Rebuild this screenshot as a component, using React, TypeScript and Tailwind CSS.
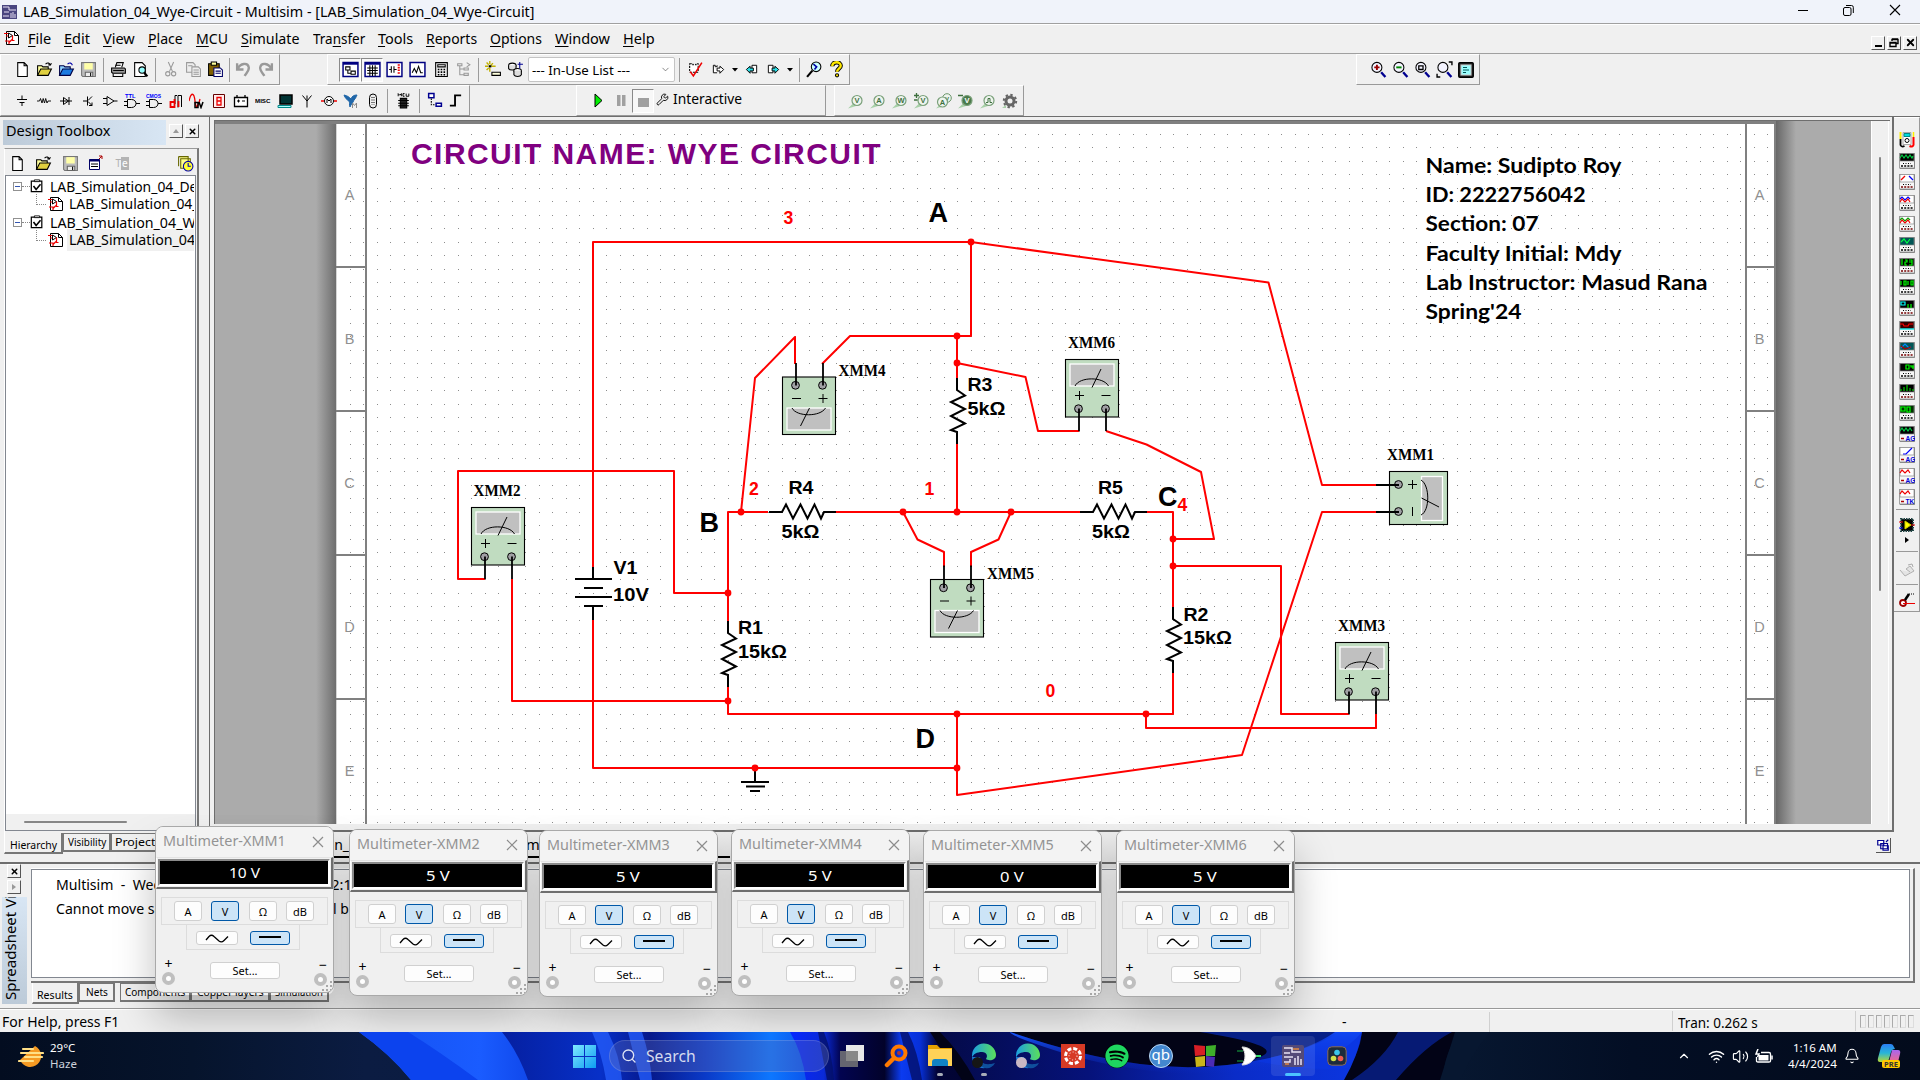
import React, { useLayoutEffect, useRef, useState } from "react";
import { Bell, ChevronDown, ChevronUp, Search, Volume2, Wifi, X, Wrench } from "lucide-react";
import { FaSpotify } from "react-icons/fa";

/* Single line of text squeezed or stretched to a fixed width. */
function T({ w, children, className = "" }: { w: number; children: React.ReactNode; className?: string }) {
  const ref = useRef<HTMLSpanElement>(null);
  const [k, setK] = useState(1);
  useLayoutEffect(() => {
    if (ref.current && ref.current.offsetWidth) setK(w / ref.current.offsetWidth);
  }, [w]);
  return (
    <span className={"inline-block shrink-0 whitespace-pre " + className} style={{ width: w }}>
      <span ref={ref} className="inline-block origin-left" style={{ transform: `scaleX(${k})` }}>
        {children}
      </span>
    </span>
  );
}

function I({ children, s = 17 }: { children: React.ReactNode; s?: number }) {
  return (
    <svg width={s} height={s} viewBox="0 0 16 16" fill="none" stroke="#000" strokeWidth="1" className="shrink-0">
      {children}
    </svg>
  );
}

function Cell({ w = 22, children, down = false }: { w?: number; children?: React.ReactNode; down?: boolean }) {
  return (
    <div
      className={
        "flex h-6 shrink-0 items-center justify-center " +
        (down ? "border border-[#8a8a8a] border-r-white border-b-white bg-[#f8f8f8]" : "")
      }
      style={{ width: w }}
    >
      {children}
    </div>
  );
}

function Sep({ w = 8 }: { w?: number }) {
  return (
    <div className="flex h-6 shrink-0 justify-center" style={{ width: w }}>
      <div className="h-6 w-px bg-[#9b9b9b]" />
    </div>
  );
}

const bar = "flex items-center border-b border-r border-l border-t border-l-white border-t-white border-r-[#999] border-b-[#999] shrink-0";

const NewI = <I><path d="M3.500 1.500h6l3 3v10h-9zM9.500 1.500v3h3" fill="#fff" /></I>;
const OpenI = (
  <I><path d="M1.500 13.500v-9h4l1 1h5v2" fill="#ffff9c" /><path d="M1.500 13.500l3-6h10l-3 6z" fill="#e0d040" /><path d="M9 3c2-2 4-1 4.500 1m0 0l-2-.5m2 .5l1-2" /></I>
);
const OpenBlueI = (
  <I><path d="M1.500 13.500v-9h4l1 1h5v2" fill="#8ed0ff" stroke="#004" /><path d="M1.500 13.500l3-6h10l-3 6z" fill="#1c7be0" stroke="#004" /><path d="M9 3c2-2 4-1 4.500 1" stroke="#00a" /></I>
);
const SaveI = (
  <I><path d="M1.500 1.500h13v13h-12l-1-1z" fill="#bcbcbc" stroke="#777" /><path d="M4 2h8v6H4z" fill="#ffffa8" stroke="none" /><path d="M5 10.500h7v4H5z" fill="#eee" stroke="#666" /><path d="M10 11v3" stroke="#000" /></I>
);
const PrintI = (
  <I><path d="M5 6l1.500-4.500h6L11 6" fill="#fff" /><path d="M1.500 6.500h12l1 1v4h-12l-1-1z" fill="#999" /><path d="M3 12v2.500h9V12M3 9h10" /><path d="M5 4h5" /></I>
);
const PreviewI = (
  <I><path d="M2.500 1.500h7l3 3v10h-10z" fill="#fff" /><circle cx="9.500" cy="8.500" r="3" fill="#9ff" /><path d="M11.500 11l3 3.500" strokeWidth="2" /></I>
);
const CutI = <I><path d="M5 1l4 9M10 1L6 10" stroke="#999" /><circle cx="4.500" cy="12" r="2" stroke="#999" /><circle cx="10" cy="12" r="2" stroke="#999" /></I>;
const CopyI = (
  <I><path d="M1.500 1.500h6l2 2v7h-8z" fill="#eee" stroke="#999" /><path d="M6.500 5.500h6l2 2v7h-8z" fill="#eee" stroke="#999" /><path d="M8 8.500h5M8 10.500h5M8 12.500h5M3 4.500h4" stroke="#999" /></I>
);
const PasteI = (
  <I><path d="M1.500 2.500h10v11h-10z" fill="#806000" /><path d="M4 1h5v3H4z" fill="#ff9" /><path d="M6.500 6.500h6l2 2v6h-8z" fill="#fff" stroke="#006" /><path d="M8 9.500h5M8 11.500h5" stroke="#006" /></I>
);
const UndoI = <I><path d="M2 2v6h6M2.500 7.500C5 2 12 1 13 6c.4 3-2 5-4 8" stroke="#999" strokeWidth="2.200" /></I>;
const RedoI = <I><path d="M14 2v6H8M13.500 7.500C11 2 4 1 3 6c-.4 3 2 5 4 8" stroke="#999" strokeWidth="2.200" /></I>;
const winFrame = <path d="M1 1.500h14v13H1z" fill="#fff" stroke="#000080" strokeWidth="1.400" />;
const W1 = <I>{winFrame}<path d="M1 2.500h14" stroke="#000080" strokeWidth="2" /><path d="M3.500 5.500h4v3h-4zM8.500 9.500h4v3h-4zM5.500 9v2.500h3" /></I>;
const W2 = <I>{winFrame}<path d="M1 2.500h14" stroke="#000080" strokeWidth="2" /><path d="M3 6.500h10M3 9h10M3 11.500h10M5.500 4v10M8 4v10M10.500 4v10" /></I>;
const W3 = <I>{winFrame}<path d="M3 8h2M8 8h2M5 5v6M7.500 5v6" /><path d="M12 3v10" stroke="#e00" strokeWidth="2" strokeDasharray="1.500 1" /></I>;
const W4 = <I>{winFrame}<path d="M3 11l2-4 2 4 2-6 2 6h2" /></I>;
const W5 = <I><path d="M2.500 1.500h11v13h-11z" fill="#eee" /><path d="M4.500 3.500h7v2h-7z" fill="#fff" /><path d="M4.500 8h7M4.500 10.500h7M4.500 13h7" strokeDasharray="1.500 1.200" strokeWidth="1.500" /></I>;
const W6 = <I><path d="M2.500 2.500h4v2h-4zM8.500 6.500h4v2h-4zM8.500 11.500h4v2h-4zM4.500 5v8h4M4.500 7.500h4M11 1.500l3 2-3 2" stroke="#999" /></I>;
const W7 = <I><path d="M4.500 0v3M4.500 6v4M0 5h3M6 5h4M1.500 1.500l2 2M7.500 2l-2 2M1.500 8.500l2-2" stroke="#c0b000" strokeWidth="1.300" /><path d="M4 4.500h1.500v1H4z" fill="#000" /><path d="M6.500 10.500h8v3h-8z" fill="#ffd" /></I>;
const W8 = <I><ellipse cx="5" cy="4" rx="3.500" ry="2" fill="#fff" /><path d="M1.500 4v3c1 2 6 2 7 0V4" fill="#ddd" /><ellipse cx="10" cy="9" rx="3.500" ry="2" fill="#fff" /><path d="M6.500 9v4c1 2 6 2 7 0V9" fill="#ddd" /><path d="M10 3h5m-3-2v6" stroke="#000090" /></I>;
const Chk = <I><path d="M2.500 2.500h3v1h3v-1h2v8h-8z" fill="#fff" strokeDasharray="2 1" /><path d="M3 10l3 4L14 1.500" stroke="#e00" strokeWidth="1.500" /></I>;
const Gate1 = <I s={15}><path d="M2.500 3.500h2v1.500h2V3.500M2.500 3.500v8h4" fill="#fff" /><path d="M6.500 6.500h3v-2l4 3.500-4 4v-2.500h-3z" fill="#fff" /></I>;
const Gate2 = <I s={15}><path d="M8.500 3.500h5v8h-5z" fill="#fff" /><path d="M10 6.500H6.500v-2L2.500 8l4 4v-2.500H10z" fill="#2ce0e8" /></I>;
const Gate3 = <I s={15}><path d="M2.500 3.500h5v8h-5z" fill="#fff" /><path d="M6.500 6.500h3v-2l4 3.500-4 4v-2.500h-3z" fill="#2ce0e8" /></I>;
const FindI = <I><circle cx="9.500" cy="5.500" r="4.500" fill="#cff" /><path d="M7 3l3 2.500L8 8" stroke="#00a" strokeWidth="1.500" /><path d="M6 9l-5 6" strokeWidth="2" /></I>;
const HelpI = <I><path d="M4 5c0-5 8-5 8-.5C12 7 8.500 7.500 8.500 10" stroke="#000" strokeWidth="4" /><path d="M4 5c0-5 8-5 8-.5C12 7 8.500 7.500 8.500 10" stroke="#ffe800" strokeWidth="2.200" /><circle cx="8.500" cy="13.500" r="1.500" fill="#ffe800" /></I>;
const Tri = <svg width="6" height="4" viewBox="0 0 6 4"><path d="M0 0h6L3 3.500z" fill="#000" /></svg>;

function Mag({ kind }: { kind: number }) {
  return (
    <I>
      <circle cx="6.500" cy="6" r="4.700" fill="#f4f4ff" />
      <path d="M10.500 10.500l4 4.500" stroke="#000090" strokeWidth="2.200" />
      {kind === 0 && <path d="M4 6h5M6.500 3.500v5" stroke="#900" strokeWidth="1.800" />}
      {kind === 1 && <path d="M4 6h5" stroke="#080" strokeWidth="1.800" />}
      {kind === 2 && <path d="M4.500 4.500h4v3.500h-4z" strokeWidth="1.200" />}
      {kind === 3 && <path d="M12 1h3v3M1 12v3h3" strokeWidth="1.300" />}
    </I>
  );
}

const compIcons: React.ReactNode[] = [
  <path d="M8 2.500v4M8 9v4M3 6.500h10M5.500 9.500h5" />,
  <path d="M1 8h2.500l1-2.500L6 10l1.200-4.500L8.500 10l1.200-4.500L11 10l1-2H15" strokeWidth=".9" />,
  <path d="M2 8h12M5.500 4.500v7l5-3.500zM11 4v8" />,
  <path d="M3 8h4M7.500 3.500v9M8 7.500l4-4M8 8.500l4 4m0-3v3H9" />,
  <path d="M1 5.500h4M1 10.500h4M5 3.500v9l7-4.500zM12 8h3.500" />,
  <g><text x="1" y="4.500" fontSize="5.800" fill="#00f" stroke="none" fontWeight="bold" fontFamily="Liberation Sans, sans-serif">TTL</text><path d="M0 8.500h4M0 12.500h4M3.500 6.500h4c6 0 6 8 0 8h-4zM12 10.500h4" /></g>,
  <g><text x="0" y="4.500" fontSize="5" fill="#00f" stroke="none" fontWeight="bold" fontFamily="Liberation Sans, sans-serif">CMOS</text><path d="M0 8.500h4M0 12.500h4M3.500 6.500h4c6 0 6 8 0 8h-4zM12 10.500h4" /></g>,
  <g><path d="M7 11V2.500h2M13.500 14V2.500H10v12" stroke="#000" /><path d="M2.500 9h4v5h-4zM6.500 6v8M10.500 8v6" stroke="#e00" strokeWidth="1.800" /></g>,
  <g><path d="M0 8c2-9 5-9 6 0s3 6 5-2" stroke="#e00" strokeWidth="1.300" /><path d="M6 9.500h3v5H6zM10 9l2 5.500L14 9" strokeWidth="1.500" /></g>,
  <g><path d="M2.500 1.500h11v13h-11z" stroke="#600" fill="#fee" /><path d="M6 4.500h4v3.500H6zM6 8h4v4H6z" stroke="#e00" strokeWidth="1.300" /></g>,
  <g><path d="M1.500 4.500h13v9h-13zM4 2v2M12 2v2" fill="#fff" strokeWidth="1.300" /><path d="M4 8h3M5.500 6.500v3M9 8h3" /></g>,
  <text x="0" y="9.500" fontSize="6.200" fill="#000" stroke="none" fontWeight="bold" fontFamily="Liberation Sans, sans-serif">MISC</text>,
  <g><path d="M3 2h12v9H3z" fill="#033" stroke="#000" strokeWidth="1.500" /><path d="M1 12.500h13v2H1z" fill="#aff" stroke="#088" /></g>,
  <path d="M8 14.500V7M8 8L3.500 2.500M8 8l4.500-5.500M8 8V2.500" />,
  <g><circle cx="8" cy="8" r="4.500" fill="#fff" /><path d="M0 8h3M13 8h3" stroke="#e00" strokeWidth="1.500" /><path d="M6 10V6l2 2 2-2v4" /></g>,
  <g><path d="M1 2c4 1 5 2 7 4 1-3 3-4 6-4-1 2-1 3-3 5-1 3-3 4-4 7-1-3 0-4-1-6C4 7 2 5 1 2z" fill="#1f66a8" stroke="#1f66a8" /><path d="M9.500 15v-5l2 2.500 2-2.500v5" stroke="#888" /></g>,
  <g><rect x="4.500" y="1" width="7" height="14" rx="3.500" fill="#eee" /><path d="M7 4v8M9 4v8" strokeDasharray="1 1.500" /></g>,
];

function MiniBtn({ children, dis = false }: { children: React.ReactNode; dis?: boolean }) {
  return (
    <div className={"flex h-[14px] w-[14px] items-center justify-center border border-white border-r-[#555] border-b-[#555] bg-[#f0f0f0] text-[10px] leading-none " + (dis ? "text-[#999]" : "text-black")}>
      {children}
    </div>
  );
}

function Probe({ k }: { k: number }) {
  const l = ["V", "A", "W", "V", "A", "V", "", ""][k];
  if (k === 7)
    return <I s={16}><circle cx="8" cy="8" r="4" stroke="#666" strokeWidth="3" /><circle cx="8" cy="8" r="6.200" stroke="#666" strokeWidth="2" strokeDasharray="2.400 2.400" /><path d="M0 15l4-3v3z" fill="#a8cfa8" stroke="none" /></I>;
  const fill = k === 5 ? "#4a7a4a" : "#eef4ee";
  const cx = k === 4 ? 6.500 : 9;
  const cy = k === 4 ? 9 : 7.500;
  return (
    <I s={16}>
      <path d="M0 15.500l5-5 3 2.500z" fill="#a8d0a8" stroke="none" />
      {k === 4 && <circle cx="11" cy="5" r="4.300" fill={fill} stroke="#6a956a" />}
      {k === 4 && <text x="11" y="7.500" fontSize="6" fontWeight="bold" textAnchor="middle" stroke="none" fill="#3f703f" fontFamily="Liberation Sans, sans-serif">V</text>}
      <circle cx={cx} cy={cy} r="5" fill={fill} stroke="#7aa07a" strokeWidth="1.200" />
      {l && <text x={cx} y={cy + 2.700} fontSize="7.500" fontWeight="bold" textAnchor="middle" stroke="none" fill={k === 5 ? "#fff" : "#3f703f"} fontFamily="Liberation Sans, sans-serif">{l}</text>}
      {k === 6 && <path d="M6 9.500h2v-4h2v4h2" stroke="#3f703f" />}
      {k === 3 && <path d="M0 2.500h5M2.500 0v5M0 7h3.500" stroke="#3f703f" strokeWidth="1.300" />}
      {k === 5 && <path d="M0 2.500h5" stroke="#3f703f" strokeWidth="1.500" />}
    </I>
  );
}

/* ---------- schematic ---------- */

function Meter({ x, y, flip = false }: { x: number; y: number; flip?: boolean }) {
  const m = (v: number) => (flip ? 57.500 - v : v);
  const h = flip ? 57.500 : 0;
  return (
    <g transform={`translate(${x} ${y})`}>
      <rect x="0" y="0" width="53" height="57.500" fill="#c0dcc0" stroke="#000" strokeWidth="1.100" />
      <rect x="4.500" y={flip ? h - 26.500 : 4.500} width="44" height="22" fill="#c0c0c0" stroke="#fff" strokeWidth="1.300" />
      <path d={flip ? "M9.500 31C14 40 38 40 43 31" : "M9.500 26.500C14 17 38 17 43 26.500"} fill="none" stroke="#000" />
      <path d={flip ? "M27 31L18 49" : "M35.500 9.500L26.500 28"} stroke="#000" />
      <circle cx="13" cy={m(49.200)} r="3.900" fill="#a0a0a4" stroke="#000" />
      <circle cx="40" cy={m(49.200)} r="3.900" fill="#a0a0a4" stroke="#000" />
      <path d={`M13.500 ${m(49)}V${m(71.500)}M40.500 ${m(49)}V${m(71.500)}`} stroke="#000" strokeWidth="1.800" />
      <path d={`M9.500 ${m(36)}h9M36 ${m(36)}h9`} stroke="#000" />
      <path d={flip ? `M40.500 ${m(36) - 4.500}v9` : `M14 ${m(36) - 4.500}v9`} stroke="#000" />
    </g>
  );
}

const ZV = "v12l8 5.500l-14 6.500l14 7l-14 7l14 7.500l-14 6.500l6 2v12";
const ZH = "h13l4-7.500l7 14l7.500-14l7 14l7-14l6.500 14l3-6.500h12";

function Txt({ x, y, w, s = 18.500, c = "#000", f = "Liberation Sans, sans-serif", sp = false, children }: { x: number; y: number; w?: number; s?: number; c?: string; f?: string; sp?: boolean; children: string }) {
  return (
    <text x={x} y={y} fontSize={s} fill={c} fontWeight="bold" fontFamily={f} {...(w ? { textLength: w, lengthAdjust: sp ? ("spacing" as const) : ("spacingAndGlyphs" as const) } : {})}>
      {children}
    </text>
  );
}

function Schematic() {
  const dots = [[971, 242], [957, 336], [957, 363], [957, 512], [741, 512], [903, 512], [1011, 512], [1173, 539], [1173, 566], [728, 593], [728, 701], [957, 714], [1146, 714], [957, 768], [755, 768]];
  return (
    <svg width="1656" height="703" viewBox="215 121 1656 703" className="block shrink-0">
      <defs>
        <pattern id="grid" x="350" y="134" width="27" height="27" patternUnits="userSpaceOnUse">
          <path d="M0 0h1v1H0zM13 0h1v1h-1zM0 13h1v1H0zM13 13h1v1h-1z" fill="#8c8c8c" />
        </pattern>
        <linearGradient id="shL"><stop offset="0" stopColor="#ababab" /><stop offset="1" stopColor="#6e6e6e" /></linearGradient>
        <linearGradient id="shR"><stop offset="0" stopColor="#646464" /><stop offset="1" stopColor="#ababab" /></linearGradient>
      </defs>
      <rect x="215" y="121" width="1656" height="703" fill="#ababab" />
      <rect x="316" y="121" width="20" height="703" fill="url(#shL)" />
      <rect x="1775" y="121" width="21" height="703" fill="url(#shR)" />
      <rect x="336.500" y="124" width="1438" height="700" fill="#fff" />
      <rect x="350" y="134" width="1423" height="690" fill="url(#grid)" />
      <path d="M215 122.500H1774" stroke="#808080" strokeWidth="3" />
      <path d="M366 124V824M1746 124V824M1775 121V824M336 267H366M336 411H366M336 555H366M336 699H366M1746 267H1775M1746 411H1775M1746 555H1775M1746 699H1775" stroke="#808080" strokeWidth="2" />
      {["A", "B", "C", "D", "E"].map((l, i) => (
        <g key={l} fontSize="14.500" fill="#909090" fontFamily="Liberation Sans, sans-serif" textAnchor="middle">
          <text x="349.500" y={200 + i * 144}>{l}</text>
          <text x="1759.500" y={200 + i * 144}>{l}</text>
        </g>
      ))}
      <g fill="none" stroke="#f00" strokeWidth="2" strokeLinejoin="round">
        <path d="M593 567V242H971V336H957V379M593 620V768H957M957 336H850L822 364M795 364V337L755 378L741 512" />
        <path d="M957 444V512M957 363L1025.500 377L1038 431H1079M1106 431L1146.500 444.500L1201 472L1214 539H1173" />
        <path d="M728 621V512H768M836 512H1080M1147 512H1173V608M903 512L917.500 539.500L944 552V567M1011 512L998.500 539.500L971 552V567" />
        <path d="M1173 673V714H728V687M1173 566H1281V714H1349M1376 714V728H1146V714M957 714V795L1242 755L1322 512H1377M971 242L1268.500 282.500L1322 485H1377" />
        <path d="M485 579H458V471H674V593H728M512 579V701H728" />
      </g>
      <g fill="none" stroke="#000" strokeWidth="2">
        <path d={"M957 378" + ZV} />
        <path d={"M1173 607" + ZV} />
        <path d={"M728 621" + ZV} />
        <path d={"M769 512" + ZH} />
        <path d={"M1080 512" + ZH} />
        <path d="M593 567V579M575 579H612M584 588H603M575 597H612M584 606H603M593 606V620" />
        <path d="M755 768V782M741 782H769M746 786.500H765M750 791H760" />
      </g>
      {dots.map(([x, y]) => <circle key={x + "-" + y} cx={x} cy={y} r="3.400" fill="#f00" />)}
      <Meter x={471.500} y={507.500} />
      <Meter x={1335.500} y={642.500} />
      <Meter x={1065.500} y={359.500} />
      <Meter x={782.500} y={377} flip />
      <Meter x={930.500} y={579.500} flip />
      <g>
        <rect x="1389.500" y="471.500" width="58" height="53" fill="#c0dcc0" stroke="#000" strokeWidth="1.100" />
        <rect x="1421.500" y="476.500" width="21" height="44" fill="#c0c0c0" stroke="#fff" strokeWidth="1.300" />
        <path d="M1421 480C1430 485 1430 511 1421 515M1421.500 498L1439 507M1408 484.500h9M1412.500 480v9M1412.500 507v9" fill="none" stroke="#000" />
        <circle cx="1398.500" cy="484.500" r="3.900" fill="#a0a0a4" stroke="#000" />
        <circle cx="1398.500" cy="511.500" r="3.900" fill="#a0a0a4" stroke="#000" />
        <path d="M1376 485H1399M1376 512H1399" stroke="#000" strokeWidth="1.800" />
      </g>
      <Txt x={411} y={164} w={469.500} s={30} c="#800080" sp>CIRCUIT NAME: WYE CIRCUIT</Txt>
      {([["A", 928.500, 222], ["B", 699.500, 532], ["C", 1158, 505.500], ["D", 915.500, 748]] as [string, number, number][]).map(([t, x, y]) => <Txt key={t} x={x} y={y} s={27}>{t}</Txt>)}
      {([["3", 783.500, 224], ["2", 749, 494.500], ["1", 924.500, 494.500], ["4", 1177.500, 510.500], ["0", 1045.500, 696.500]] as [string, number, number][]).map(([t, x, y]) => <Txt key={t} x={x} y={y} s={19} w={9.800} c="#f00">{t}</Txt>)}
      {([["R4", 788.500, 494, 25], ["5kΩ", 781.500, 537.500, 38], ["R1", 738, 634, 25], ["15kΩ", 738, 658, 49], ["V1", 613.500, 574, 24], ["10V", 613, 601, 36], ["R3", 967.500, 391, 25], ["5kΩ", 967.500, 415, 38], ["R5", 1098, 494, 25], ["5kΩ", 1092, 537.500, 38], ["R2", 1183.500, 620.500, 25], ["15kΩ", 1183, 644, 49]] as [string, number, number, number][]).map(([t, x, y, w]) => <Txt key={x + t} x={x} y={y} w={w} s={19}>{t}</Txt>)}
      {([["XMM4", 838.500, 376], ["XMM6", 1068, 348], ["XMM1", 1387, 460], ["XMM5", 987, 578.500], ["XMM3", 1338, 631], ["XMM2", 473.500, 496]] as [string, number, number][]).map(([t, x, y]) => <Txt key={t} x={x} y={y} w={47} s={16.500} f="Liberation Serif, serif">{t}</Txt>)}
      {([["Name: Sudipto Roy", 196], ["ID: 2222756042", 160], ["Section: 07", 113], ["Faculty Initial: Mdy", 196], ["Lab Instructor: Masud Rana", 282], ["Spring'24", 96]] as [string, number][]).map(([t, w], i) => <Txt key={t} x={1425.500} y={173 + i * 29.200} w={w} s={21.300} f="Lato, sans-serif">{t}</Txt>)}
    </svg>
  );
}

/* ---------- right instrument strip ---------- */

const inst: { bg: string; d: string; c: string; d2?: string; c2?: string; lab?: string }[] = [
  { bg: "#000", d: "M1 5l2-3 2 3 2-3 2 3 2-3 2 3 1-2", c: "#0c4" },
  { bg: "#fff", d: "M2 6l4-4", c: "#e00", d2: "M10 2l4 4", c2: "#00f" },
  { bg: "#fff", d: "M1 4l2-2 3 3 3-3 2 2", c: "#00f", d2: "M1 7l2-3 3 3 3-3 2 3", c2: "#e00" },
  { bg: "#fff", d: "M1 4l2-2 3 3 3-3 2 2", c: "#0a0", d2: "M1 7l2-3 3 3 3-3 2 3", c2: "#e00" },
  { bg: "#055", d: "M2 5l3-3 3 4 3-4", c: "#0f4" },
  { bg: "#000", d: "M3 1v6M6 2h2v2H6v3h2M10 2h3v5h-3M10 4h3", c: "#0f0" },
  { bg: "#000", d: "M2 2v4M5 2h2v4H5zM9 2v4M12 2h2v4h-2z", c: "#0f0" },
  { bg: "#000", d: "M2 2h4v3H2z", c: "#0ff", d2: "M9 4v4M12 4v4", c2: "#0f0" },
  { bg: "#300", d: "M1 3h3l1 2h4l1-2h4", c: "#f00", d2: "M1 8h14", c2: "#0ff" },
  { bg: "#055", d: "M2 6l4-4 4 4 2-1", c: "#08f", d2: "M2 4l4 3 6-2", c2: "#a00" },
  { bg: "#000", d: "M7 2h3v4H7zM12 2v2h3M14 2v4", c: "#0f0" },
  { bg: "#000", d: "M2 7V5M5 7V3M8 7V1M11 7V4M14 7V5", c: "#0c0" },
  { bg: "#030", d: "M2 2h4v4H2zM8 2h3v5H8z", c: "#0f0" },
  { bg: "#000", d: "M1 5l2-3 2 3 2-3 2 3 2-3 2 3", c: "#0c4", lab: "AG" },
  { bg: "#fff", d: "M4 7h3l6-6", c: "#00f", lab: "AG" },
  { bg: "#fff", d: "M1 5l2-3 3 3 3-3 2 3", c: "#e00", lab: "AG" },
  { bg: "#fff", d: "M1 5l2-3 3 3 3-3 2 3", c: "#e00", lab: "TK" },
];

function RightStrip() {
  return (
    <div className="flex h-[495px] w-[26px] flex-col items-center border-r border-b border-t border-t-white border-[#999] pt-[11px]">
      <div className="flex h-[21.05px] shrink-0 items-center justify-center">
        <I s={16}>
          <path d="M4 0.500h8v12H4z" fill="#fff" stroke="#aaa" />
          <path d="M5 1.500h6v3H5z" fill="#0dd" stroke="#088" />
          <circle cx="8" cy="8.500" r="2" fill="#fff" />
          <path d="M1.500 0v7" stroke="#fe0" strokeWidth="2" />
          <path d="M1.500 7v6q1 2.500 4 1" strokeWidth="1.800" />
          <path d="M14.500 0v5" stroke="#fe0" strokeWidth="1.500" />
          <path d="M14.500 5v8q-1 2.500-4 1" stroke="#f00" strokeWidth="2" />
        </I>
      </div>
      {inst.map((n, i) => (
        <div key={i} className="flex h-[21.05px] shrink-0 items-center justify-center">
          <I s={16}>
            <rect x="0.500" y="0.500" width="15" height="14.500" fill="#f6f6f6" stroke="#a0a0a0" />
            <path d="M15.500 1v14.500H1" stroke="#888" />
            <rect x="1" y="0.500" width="14" height="7.500" fill={n.bg} stroke="#888" strokeWidth=".7" />
            <path d={n.d} stroke={n.c} strokeWidth="1.200" />
            {n.d2 && <path d={n.d2} stroke={n.c2 || "#000"} strokeWidth="1.200" />}
            {n.lab ? (
              <g><text x="6.500" y="14.500" fontSize="6.500" fill="#00d" stroke="none" fontWeight="bold" fontFamily="Liberation Sans, sans-serif">{n.lab}</text><path d="M2 12.500h3" stroke="#a00" strokeWidth="1.500" /></g>
            ) : (
              <g><path d="M4 10.500h8" strokeDasharray="1 1.500" /><path d="M2 13h12" strokeDasharray="2 1.200" stroke={i % 2 ? "#700" : "#000"} strokeWidth="1.500" /></g>
            )}
          </I>
        </div>
      ))}
      <div className="mt-[1px] h-px w-[22px] shrink-0 bg-[#999]" />
      <div className="mt-[7px] h-4 shrink-0">
        <I s={16}><rect x="2" y="2" width="12" height="12" fill="#000" stroke="#244" strokeDasharray="1.500 1" strokeWidth="2" /><path d="M6 4v8l6-4z" fill="#ff0" stroke="#cc0" /><path d="M0 5h4M12 8h4" stroke="#e00" /><path d="M0 11h4" stroke="#00f" /></I>
      </div>
      <svg width="4" height="6" viewBox="0 0 4 6" className="mt-[4px] shrink-0"><path d="M0 0l4 3-4 3z" /></svg>
      <div className="mt-[8px] h-px w-[22px] shrink-0 bg-[#999]" />
      <div className="mt-[10px] h-4 shrink-0"><I s={16}><path d="M1 8l5 6 9-5-4-5-4 3 4 3" stroke="#b0b0b0" fill="#e4e4e4" /><path d="M9 3l4-1 1 3" stroke="#aaa" /></I></div>
      <div className="mt-[6px] h-px w-[22px] shrink-0 bg-[#999]" />
      <div className="mt-[7px] h-4 shrink-0"><I s={16}><circle cx="4" cy="11" r="3" stroke="#900" strokeWidth="1.800" fill="#fff" /><path d="M6 8l4-6" strokeWidth="2.500" /><path d="M10 2h5" strokeDasharray="1 1" /><path d="M4 11.500h12" stroke="#e00" /></I></div>
    </div>
  );
}

/* ---------- multimeter windows ---------- */

function Btn({ on = false, className, children }: { on?: boolean; className: string; children: React.ReactNode }) {
  return (
    <div className={"flex shrink-0 items-center justify-center rounded-[3px] border text-[11px] leading-none text-black " + (on ? "border-[#0058a8] bg-[#cce4f7] " : "border-[#d0d0d0] bg-[#fdfdfd] ") + className}>
      {children}
    </div>
  );
}

function Ring() {
  return <div className="h-[13px] w-[13px] rounded-full border-4 border-[#bfbfbf] bg-white" />;
}

function Multimeter({ x, y, n, v }: { x: number; y: number; n: number; v: string }) {
  return (
    <div
      className="absolute flex h-[167px] w-[179px] flex-col overflow-hidden rounded-lg border border-[#a9a9a9] bg-[#f0f0f0]"
      style={{ left: x, top: y }}
    >
      <div className="flex h-[30px] shrink-0 items-center justify-between bg-[#f3f3f3] pr-[7px] pl-[7px] text-[14.5px] text-[#939393]">
        <T w={123} className="pb-[4px] leading-[26px]">{"Multimeter-XMM" + n}</T>
        <svg width="14" height="14" viewBox="0 0 14 14" className="mr-[1px] mb-[1px]"><path d="M2 2l10 10M12 2L2 12" stroke="#8c8c8c" strokeWidth="1.200" /></svg>
      </div>
      <div className="h-[32px] shrink-0 border-t border-r-2 border-b-2 border-l border-t-[#e3e3e3] border-r-[#6e6e6e] border-b-[#6e6e6e] border-l-white p-[1px]">
        <div className="flex h-full items-center justify-center border-2 border-[#8a8a8a] border-r-white border-b-white bg-black pb-[1px] text-[14.5px] leading-none text-white">
          <T w={v === "10 V" ? 31 : 24}>{v}</T>
        </div>
      </div>
      <div className="mt-[8px] ml-[5px] flex h-[28px] w-[167px] shrink-0 items-center border border-[#dcdcdc] pl-[12px]">
        <Btn className="h-[20px] w-[28px]">A</Btn>
        <Btn on className="ml-[9px] h-[20px] w-[28px]">V</Btn>
        <Btn className="ml-[10px] h-[20px] w-[28px]">Ω</Btn>
        <Btn className="ml-[9px] h-[20px] w-[28px]">dB</Btn>
      </div>
      <div className="ml-[30px] flex h-[25px] w-[114px] shrink-0 items-start border border-t-0 border-[#dcdcdc] pt-[6px] pl-[9px]">
        <Btn className="h-[14px] w-[42px]">
          <svg width="24" height="9" viewBox="0 0 24 9"><path d="M1 6L4 2.500Q6.500 0 9 2.500L14 7Q16.500 9 19 6.500L23 2.500" fill="none" stroke="#000" strokeWidth="1.300" /></svg>
        </Btn>
        <Btn on className="ml-[12px] h-[14px] w-[40px]"><div className="mb-[2px] h-[2px] w-[22px] bg-black" /></Btn>
      </div>
      <div className="flex grow items-start justify-between pr-[6px] pl-[6px]">
        <div className="flex flex-col items-center pt-[6px] text-[14px] leading-[16px] text-black">+<Ring /></div>
        <Btn className="mt-[12px] ml-[1px] h-[17px] w-[70px]">Set...</Btn>
        <div className="flex w-[13px] flex-col items-center pt-[7px] text-[14px] leading-[16px] text-black"><span className="pl-[5px]">−</span><Ring /></div>
      </div>
      <svg className="absolute right-0 bottom-0" width="12" height="12" viewBox="0 0 12 12">
        <path d="M9 1h2v2H9zM9 5h2v2H9zM9 9h2v2H9zM5 5h2v2H5zM5 9h2v2H5zM1 9h2v2H1z" fill="#a8a8a8" />
      </svg>
    </div>
  );
}

/* ---------- taskbar ---------- */

function Wallpaper() {
  return (
    <svg className="absolute inset-0" width="1920" height="48" viewBox="0 0 1920 48">
      <defs>
        <linearGradient id="base">
          <stop offset="0" stopColor="#030d20" /><stop offset=".1" stopColor="#06142c" /><stop offset=".19" stopColor="#0b1c42" /><stop offset=".76" stopColor="#071730" /><stop offset=".85" stopColor="#030e24" /><stop offset="1" stopColor="#030b1c" />
        </linearGradient>
        <linearGradient id="r1"><stop offset="0" stopColor="#1450f0" /><stop offset=".6" stopColor="#1a5cff" /><stop offset="1" stopColor="#0a3ce0" /></linearGradient>
        <linearGradient id="r2"><stop offset="0" stopColor="#051fa0" /><stop offset=".3" stopColor="#0730c8" /><stop offset=".45" stopColor="#06188a" /><stop offset=".62" stopColor="#0a3ac8" /><stop offset=".82" stopColor="#0d77ff" /><stop offset="1" stopColor="#0b40e0" /></linearGradient>
        <linearGradient id="r3"><stop offset="0" stopColor="#0727ff" /><stop offset=".16" stopColor="#0a2ad8" /><stop offset=".24" stopColor="#020450" /><stop offset=".45" stopColor="#02022a" /><stop offset=".53" stopColor="#0b3bf0" /><stop offset=".62" stopColor="#0730d8" /><stop offset=".7" stopColor="#020438" /><stop offset="1" stopColor="#02032a" /></linearGradient>
        <linearGradient id="r4"><stop offset="0" stopColor="#040a48" /><stop offset=".35" stopColor="#06127a" /><stop offset=".7" stopColor="#0a2cc8" /><stop offset="1" stopColor="#0b36e0" /></linearGradient>
        <linearGradient id="r5" x1="0" y1="0" x2="0" y2="1"><stop offset="0" stopColor="#1658ff" /><stop offset="1" stopColor="#0b2fd0" stopOpacity="0" /></linearGradient>
      </defs>
      <rect width="1920" height="48" fill="url(#base)" />
      <path d="M359 0H560V48H411Q390 22 359 0z" fill="url(#r1)" />
      <path d="M359 0H408Q440 20 478 48H411Q390 22 359 0z" fill="#0c43ee" />
      <path d="M502 0H830V48H528Q518 20 502 0z" fill="url(#r2)" />
      <path d="M592 0h16q12 24 14 48h-16Q602 22 592 0zM628 0h14q8 24 10 48h-12z" fill="#2258f5" opacity=".85" />
      <path d="M790 0H1000V48H806Q802 20 790 0z" fill="url(#r3)" />
      <path d="M818 0h6q8 20 10 48h-7zM900 0h8q10 20 14 48h-10z" fill="#04106a" opacity=".8" />
      <path d="M930 0H1460Q1444 20 1443 48H962z" fill="#020316" />
      <path d="M940 0H1010Q1080 24 1140 32T1260 28Q1310 18 1340 0H1362Q1358 24 1344 48H975Q960 20 940 0z" fill="url(#r4)" />
      <path d="M1010 0Q1080 24 1140 32T1260 28Q1310 18 1335 0H1362Q1340 26 1300 34T1180 42Q1110 36 1060 20T1010 0z" fill="url(#r5)" />
      <path d="M1200 0H1362Q1360 20 1348 36Q1310 40 1250 28Q1300 16 1200 0z" fill="#0b36e6" opacity=".55" />
      <path d="M1398 0H1452Q1425 14 1396 48H1352Q1385 26 1398 0z" fill="#07208c" opacity=".8" />
      <path d="M1490 0Q1472 22 1460 48H1440L1455 0z" fill="#071730" />
    </svg>
  );
}

function Edge({ badge }: { badge: string }) {
  return (
    <svg width="26" height="26" viewBox="0 0 26 26">
      <defs><linearGradient id="eg" x1="0" y1="0" x2="1" y2="0"><stop offset="0" stopColor="#1b9de2" /><stop offset="1" stopColor="#5be05a" /></linearGradient></defs>
      <path d="M1 14C1 22 8 26 15 25c-5-2-7-6-6-11z" fill="#1a74cf" />
      <path d="M1 13A12 12 0 0 1 25 12c0 6-8 6-10 4 2-3 1-7-4-7-5 0-9 2-10 6z" fill="url(#eg)" />
      <path d="M10 14c-1 6 4 9 14 6-2 4-6 6-10 5-5-1-7-6-4-11z" fill="#0f4f9c" />
      <circle cx="6.500" cy="19.500" r="5.500" fill={badge} />
    </svg>
  );
}

function Taskbar() {
  const icons: [number, React.ReactNode, boolean][] = [
    [852, <svg width="26" height="24" viewBox="0 0 26 24"><rect x="7" y="1" width="18" height="16" fill="#e8e8e8" /><rect x="1" y="7" width="18" height="16" fill="#777" opacity=".85" /></svg>, false],
    [897, <svg width="24" height="24" viewBox="0 0 24 24"><circle cx="15" cy="9" r="6.500" fill="none" stroke="#ff7a00" strokeWidth="4" /><path d="M10 14l-7 7" stroke="#ff7a00" strokeWidth="4.500" strokeLinecap="round" /><circle cx="15" cy="9" r="2" fill="#a33" /></svg>, false],
    [941, <svg width="26" height="24" viewBox="0 0 26 24"><path d="M1 1h9l3 3h12v18H1z" fill="#e5a100" /><rect x="1" y="5" width="24" height="17" rx="1" fill="#ffd257" /><path d="M5 22v-4q0-3 3-3h10q3 0 3 3v4z" fill="#1182c4" /></svg>, true],
    [985, <Edge badge="#161616" />, true],
    [1029, <Edge badge="#c9b8c4" />, false],
    [1073, <svg width="24" height="24" viewBox="0 0 24 24"><rect width="24" height="24" fill="#d73a25" /><circle cx="12" cy="12" r="7.500" fill="none" stroke="#fff" strokeWidth="3" strokeDasharray="4 1.890" /><circle cx="12" cy="12" r="4" fill="none" stroke="#fff" strokeWidth="1" strokeDasharray="1 2" /></svg>, false],
    [1117, <div className="flex h-6 w-6 items-center justify-center rounded-full bg-black"><FaSpotify size={24} color="#1ed760" /></div>, false],
    [1161, <div className="flex h-6 w-6 items-center justify-center rounded-full border border-[#bcd8f4] bg-[#4387cf] pb-[3px] text-[15px] leading-none text-white">qb</div>, false],
    [1205, <svg width="24" height="24" viewBox="0 0 24 24"><path d="M1 1l11 1v9l-10 1z" fill="#d81f26" /><path d="M13 2l10-1-1 11h-9z" fill="#3fae2a" /><path d="M2 13l10-1v10l-9 1z" fill="#c9b51a" /><path d="M13 12l9 1-1 10-8-1z" fill="#4b2bb5" /></svg>, false],
    [1249, <svg width="26" height="22" viewBox="0 0 26 22"><path d="M6 2c7 0 11 4 14 9-3 5-7 9-14 9 4-6 4-12 0-18z" fill="#fff" stroke="#ddd" /><path d="M1 6h6M1 16h6" stroke="#173" strokeWidth="1.500" /><path d="M20 11h5" stroke="#3d6" strokeWidth="2" /></svg>, false],
    [1293, <svg width="24" height="24" viewBox="0 0 24 24"><rect x="1" y="1" width="22" height="22" rx="2" fill="#544a78" /><path d="M3 4h8v4h9M3 9h6M3 13h9M3 18h6v-3M14 21v-7M17 21v-9M20 21v-6" stroke="#e8e2f4" strokeWidth="1.500" fill="none" /><path d="M12 5h6M4 20h4" stroke="#e08840" strokeWidth="1.500" /></svg>, true],
    [1337, <svg width="20" height="20" viewBox="0 0 20 20"><rect x=".8" y=".8" width="18.400" height="18.400" rx="4" fill="#1d2b3b" stroke="#8a6d5a" /><circle cx="10" cy="6.500" r="2.800" fill="#3ac5ea" /><circle cx="6.500" cy="12.500" r="2.800" fill="#cfe04a" /><circle cx="13.500" cy="12.500" r="2.800" fill="#ef5a50" /></svg>, false],
  ];
  return (
    <div className="relative flex h-12 shrink-0 items-center overflow-hidden text-white">
      <Wallpaper />
      <div className="relative flex h-12 w-full items-center">
        <div className="ml-[18px] w-[32px] shrink-0">
          <svg width="26" height="26" viewBox="0 0 26 26"><path d="M17 3a11 11 0 1 1-15 14z" fill="#f59a23" /><path d="M5 6h10M3 10h22M7 14h17M1 18h14" stroke="#ffdf86" strokeWidth="2.200" strokeLinecap="round" /></svg>
        </div>
        <div className="flex w-[523px] shrink-0 flex-col text-[11.500px] leading-[16px]"><T w={25}>29°C</T><T w={27} className="text-[#ccd2dc]">Haze</T></div>
        <svg width="23" height="23" viewBox="0 0 23 23" className="shrink-0">
          <defs><linearGradient id="wn" x1="0" y1="0" x2="1" y2="1"><stop offset="0" stopColor="#7fe9ff" /><stop offset="1" stopColor="#0d9df2" /></linearGradient></defs>
          <path d="M0 0h11v11H0zM12 0h11v11H12zM0 12h11v11H0zM12 12h11v11H12z" fill="url(#wn)" />
        </svg>
        <div className="ml-[13px] flex h-8 w-[220px] shrink-0 items-center rounded-full border border-white/15 bg-[#5b6bb5]/35 pl-[11px]">
          <Search size={16} strokeWidth={2} color="#dfe4f5" />
          <T w={50} className="ml-[9px] text-[16px] leading-[24px] text-[#d5dbef]">Search</T>
        </div>
        <div className="ml-[1px] flex">
          {icons.map(([cx, ic, run]) => (
            <div key={cx} className={"relative flex h-10 w-[44.100px] shrink-0 items-center justify-center rounded " + (cx === 1293 ? "bg-white/10" : "")}>
              {ic}
              {run && <div className={"absolute bottom-0 h-[3px] rounded-full " + (cx === 1293 ? "w-4 bg-[#4cc2ff]" : "w-[6px] bg-[#a8adb8]")} />}
            </div>
          ))}
        </div>
        <div className="ml-auto flex items-center pr-[19px]">
          <ChevronUp size={14} strokeWidth={2} className="mr-[17px]" />
          <Wifi size={17} strokeWidth={2} className="mr-[7px]" />
          <Volume2 size={17} strokeWidth={1.600} className="mr-[6px]" />
          <svg width="18" height="15" viewBox="0 0 18 15" className="mr-[15px]"><path d="M6 3.500h8q1.500 0 1.500 1.500v7q0 1-1.500 1H3q-1.500 0-1.500-1V8" fill="none" stroke="#fff" strokeWidth="1.300" /><rect x="3.500" y="6" width="10" height="5.500" fill="#fff" /><path d="M17 6.500v4M3 0L1 5h3L2.500 8" stroke="#fff" strokeWidth="1.500" fill="none" /></svg>
          <div className="mr-[7px] flex flex-col items-end text-[11.500px] leading-[16px]"><T w={44}>1:16 AM</T><T w={49}>4/4/2024</T></div>
          <Bell size={16} strokeWidth={1.600} className="mr-[17px]" />
          <svg width="24" height="26" viewBox="0 0 24 26">
            <defs>
              <linearGradient id="cp1" x1="0" y1="0" x2="0" y2="1"><stop offset="0" stopColor="#2a7df5" /><stop offset=".5" stopColor="#27b5d8" /><stop offset="1" stopColor="#b8d832" /></linearGradient>
              <linearGradient id="cp2" x1="0" y1="0" x2="0" y2="1"><stop offset="0" stopColor="#a866f0" /><stop offset="1" stopColor="#f06a8a" /></linearGradient>
            </defs>
            <path d="M7 1h7q2 0 3 3l1 2q-3 0-4 3l-2 7q-1 3-4 3H3q-3 0-2-4L4 4q1-3 3-3z" fill="url(#cp1)" />
            <path d="M15 7h6q3 0 2 4l-2 8h-9z" fill="url(#cp2)" />
            <rect x="5" y="17" width="18" height="8" rx="2" fill="#ffc800" />
            <text x="14" y="23.700" fontSize="7.500" textAnchor="middle" fontWeight="bold" fill="#333" fontFamily="Noto Sans, sans-serif">PRE</text>
          </svg>
        </div>
      </div>
    </div>
  );
}

/* ---------- left toolbox ---------- */

const SchI = <I s={16}><path d="M2.500 1.500h8l4 4v9h-12z" fill="#fff" /><path d="M10.500 1.500v4h4" /><path d="M0 3.500h4M2 6h3M5 12.500l3-3M1 11h4v3" stroke="#e00" strokeWidth="1.200" /><path d="M4.500 3v5l4-2.500z" fill="#fff" /><path d="M8.500 5.500v5h2" stroke="#e00" strokeWidth="1.200" /></I>;

function TreeRow({ child = false, label, sel = false, w }: { child?: boolean; label: string; sel?: boolean; w: number }) {
  return (
    <div className="flex h-[18px] shrink-0 items-center text-[14.5px]">
      {child ? (
        <>
          <div className="mb-[9px] ml-[30px] h-[11px] w-[10px] shrink-0 border-b border-l border-dotted border-[#888]" />
          <div className="ml-[1px] flex w-[17px] shrink-0 justify-center">{SchI}</div>
          <div className={"ml-[3px] shrink-0 pl-[2px] " + (sel ? "bg-[#f0f0f0]" : "")}><T w={w} className="leading-[18px]">{label}</T></div>
        </>
      ) : (
        <>
          <div className="ml-[7px] flex h-[9px] w-[9px] shrink-0 items-center justify-center border border-[#919191] bg-white"><div className="h-px w-[5px] bg-[#3455b0]" /></div>
          <div className="w-[8px] shrink-0 border-t border-dotted border-[#888]" />
          <div className="flex w-[14px] shrink-0 justify-center"><I s={14}><path d="M1.500 2.500h12v12h-12z" fill="#fff" strokeWidth="1.400" /><path d="M5 1h6v2H5z" fill="#fff" /><path d="M4 8l3 4 5-6" strokeWidth="1.800" /></I></div>
          <T w={w} className="ml-[6px] leading-[18px]">{label}</T>
        </>
      )}
    </div>
  );
}

function Tab({ label, w, active = false, lw }: { label: string; w: number; active?: boolean; lw: number }) {
  return (
    <div
      className={"flex shrink-0 items-center justify-center border-r-2 border-b-2 border-[#777] text-[11.500px] " + (active ? "h-[21px] self-start border-l border-l-white pt-[4px]" : "h-[19px] border-t border-l border-l-[#777]")}
      style={{ width: w }}
    >
      <T w={lw} className="leading-[16px]">{label}</T>
    </div>
  );
}

export default function App() {
  const menu: [string, string, string, number][] = [
    ["", "F", "ile", 23], ["", "E", "dit", 26], ["", "V", "iew", 32], ["", "P", "lace", 35], ["", "M", "CU", 32], ["", "S", "imulate", 59],
    ["Tra", "n", "sfer", 52], ["", "T", "ools", 35], ["", "R", "eports", 51], ["", "O", "ptions", 52], ["", "W", "indow", 55], ["", "H", "elp", 32],
  ];
  return (
    <div className="relative flex h-[1080px] w-[1920px] flex-col overflow-hidden bg-[#f0f0f0] font-['Noto_Sans',sans-serif] text-black">
      {/* title bar */}
      <div className="flex h-[24px] shrink-0 items-center border-b border-[#a0a0a0] bg-[#f0f3fa] pl-[2px] text-[14.5px]">
        <svg width="16" height="16" viewBox="0 0 16 16"><rect width="15" height="14" y="1" fill="#4a4680" /><path d="M1 3h6v3h7M2 8h5M1 12h6M9 14V9M11 14V8M13 14v-4" stroke="#e8e0f4" fill="none" /></svg>
        <T w={511} className="mb-[2px] ml-[5px] leading-[20px]">LAB_Simulation_04_Wye-Circuit - Multisim - [LAB_Simulation_04_Wye-Circuit]</T>
        <div className="mb-[3px] ml-auto flex items-center pr-[19px]">
          <div className="mr-[35px] h-px w-[10px] bg-black" />
          <svg width="11" height="11" viewBox="0 0 11 11" className="mr-[35px]" fill="none" stroke="#000"><rect x=".5" y="2.500" width="7.500" height="8" rx="1.500" /><path d="M3 .5h5.500q1.800 0 1.800 1.800V8" /></svg>
          <svg width="12" height="12" viewBox="0 0 12 12"><path d="M1 1l10 10M11 1L1 11" stroke="#000" strokeWidth="1.100" /></svg>
        </div>
      </div>
      {/* menu bar */}
      <div className="flex h-[30px] shrink-0 items-center border-t border-b border-t-white border-b-[#a0a0a0] pl-[4px] text-[14.5px]">
        <div className="mb-[2px]">{SchI}</div>
        <div className="mb-[3px] ml-[8px] flex gap-[13px]">
          {menu.map(([a, u, b, w]) => (
            <T key={u + b} w={w} className="leading-[24px]">{a}<span className="underline underline-offset-2">{u}</span>{b}</T>
          ))}
        </div>
        <div className="mt-[7px] ml-auto flex gap-[2px] pr-[3px]">
          <MiniBtn><div className="mt-[7px] h-[2px] w-[7px] bg-black" /></MiniBtn>
          <MiniBtn><svg width="10" height="10" viewBox="0 0 10 10" fill="none" stroke="#000"><path d="M3 3V1.500h6v4H7M3 1h6" strokeWidth="1.400" /><path d="M1 4.500h6v4H1zM1 5h6" strokeWidth="1.400" /></svg></MiniBtn>
          <MiniBtn><X size={11} strokeWidth={4} /></MiniBtn>
        </div>
      </div>
      {/* toolbar rows */}
      <div className="flex h-[31px] shrink-0">
        <div className={bar + " w-[280px] pl-[10px]"}>
          <Cell>{NewI}</Cell><Cell>{OpenI}</Cell><Cell>{OpenBlueI}</Cell><Cell>{SaveI}</Cell><Sep />
          <Cell>{PrintI}</Cell><Cell>{PreviewI}</Cell><Sep w={9} />
          <Cell>{CutI}</Cell><Cell>{CopyI}</Cell><Cell>{PasteI}</Cell><Sep w={6} />
          <Cell>{UndoI}</Cell><Cell>{RedoI}</Cell>
        </div>
        <div className={bar + " ml-[47px] w-[523px] pl-[11px]"}>
          <Cell down>{W1}</Cell><Cell down>{W2}</Cell><Cell>{W3}</Cell><Cell w={25}>{W4}</Cell><Cell w={23}>{W5}</Cell><Cell w={21}>{W6}</Cell><Sep />
          <Cell>{W7}</Cell><Cell>{W8}</Cell>
          <div className="ml-[2px] flex h-[25px] w-[147px] shrink-0 items-center justify-between rounded-[2px] border border-[#c4c4c4] bg-white pr-[3px] pl-[3px] text-[13px]">
            <T w={98} className="leading-[22px]">--- In-Use List ---</T>
            <ChevronDown size={11} strokeWidth={1.500} color="#555" />
          </div>
          <Sep w={9} />
          <Cell w={23}>{Chk}</Cell><Cell>{Gate1}</Cell><Cell w={11}>{Tri}</Cell><Cell>{Gate2}</Cell><Cell>{Gate3}</Cell><Cell w={11}>{Tri}</Cell><Sep />
          <Cell>{FindI}</Cell><Cell w={23}>{HelpI}</Cell>
        </div>
        <div className={bar + " ml-[506px] w-[124px] pl-[10px]"}>
          <Cell><Mag kind={0} /></Cell><Cell><Mag kind={1} /></Cell><Cell><Mag kind={2} /></Cell><Cell><Mag kind={3} /></Cell>
          <Cell><I s={16}><rect x="0.800" y="0.800" width="14.400" height="14.400" rx="1" fill="#333" strokeWidth="1.500" /><rect x="3" y="3" width="10" height="10" fill="#9ff" stroke="#ccc" /><path d="M5 5.500h4M5 8h6M5 10.500h3" stroke="#055" /></I></Cell>
        </div>
      </div>
      <div className="flex h-[31px] shrink-0">
        <div className={bar + " w-[470px] pl-[10px]"}>
          {compIcons.map((c, i) => <Cell key={i} w={21.940}><I s={16}>{c}</I></Cell>)}
          <Sep />
          <Cell w={24}><I s={17}><path d="M3 4V1.500l1.500 1.500L6 1.500V4M9 1.500H7.500V4H9M10.500 1.500V4H13V1.500" strokeWidth=".9" /><path d="M5 6h6v9H5z" fill="#222" /><path d="M3 8h10M3 10.500h10M3 13h10" /></I></Cell>
          <Sep w={7} />
          <Cell w={23}><I s={17}><path d="M2.500 1.500h5v4h-5z" fill="#fff" stroke="#000090" strokeWidth="1.400" /><path d="M5 6v6h3" strokeDasharray="1.500 1" /><path d="M9.500 10.500h5v3h-5z" fill="#fff" stroke="#000090" strokeWidth="1.400" /></I></Cell>
          <Cell w={20}><I s={15}><path d="M2 13.500h5.500v-11H14" strokeWidth="2" /></I></Cell>
        </div>
        <div className={bar + " ml-[106px] w-[250px] pl-[11px]"}>
          <Cell><svg width="10" height="15" viewBox="0 0 10 15"><path d="M1 1v13l7-6.500z" fill="#0e0" stroke="#000" /></svg></Cell>
          <Cell><svg width="9" height="11" viewBox="0 0 9 11"><path d="M0 0h3.500v11H0zM5 0h3.500v11H5z" fill="#a0a0a0" /></svg></Cell>
          <Cell down><div className="mt-[3px] h-[9px] w-[11px] bg-[#a0a0a0]" /></Cell>
          <div className="ml-[2px] flex items-center pb-[3px] text-[14px]"><Wrench size={13} strokeWidth={1.700} /><T w={69} className="ml-[4px] leading-[22px]">Interactive</T></div>
        </div>
        <div className={bar + " ml-[8px] w-[190px] pl-[10px]"}>
          {[0, 1, 2, 3, 4, 5, 6, 7].map((k) => <Cell key={k}><Probe k={k} /></Cell>)}
        </div>
      </div>
      {/* middle */}
      <div className="flex h-[746px] shrink-0 border-t border-[#6e6e6e]">
        <div className="flex w-[209px] shrink-0 flex-col pt-[3px] pl-[3px]">
          <div className="flex h-[25px] shrink-0 items-center text-[14.5px]">
            <div className="flex h-[25px] w-[163px] items-start bg-gradient-to-r from-[#bccad8] to-[#d8e6f4] pl-[3px]"><T w={105} className="leading-[20px]">Design Toolbox</T></div>
            <div className="mb-[3px] ml-[3px] flex gap-[2px]"><MiniBtn dis><svg width="6" height="4"><path d="M0 4h6L3 0z" fill="#999" /></svg></MiniBtn><MiniBtn><X size={9} strokeWidth={4} /></MiniBtn></div>
          </div>
          <div className="mt-[3px] ml-[1px] flex h-[685px] w-[195px] shrink-0 flex-col border-t border-r-2 border-l border-t-[#999] border-r-[#777] border-l-white">
            <div className="flex h-[26px] shrink-0 items-center pt-[2px]">
              <Cell w={25}>{NewI}</Cell><Cell w={27}>{OpenI}</Cell><Cell w={26}>{SaveI}</Cell>
              <Cell w={25}><I s={16}><path d="M1.500 4.500h10v10h-10z" fill="#fff" stroke="#006" /><path d="M1.500 5.500h10" stroke="#006" strokeWidth="2" /><path d="M3 9h7M3 11.500h7" /><path d="M11 4l3-3m0 3V1h-3" stroke="#a00" /></I></Cell>
              <Cell w={28}><span className="flex items-center text-[10px] leading-[13px] text-[#b0b0b0]">T<span className="bg-[#b4b4b4] px-[1px] text-white">e</span></span></Cell>
              <div className="ml-auto pr-[3px]"><I s={17}><path d="M1.500 1.500h9v9M3.500 3.500h9v9h-9zM1.500 1.500v9" fill="#ff8" stroke="#660" /><circle cx="10.500" cy="10.500" r="4.500" fill="#ff3" stroke="#00a" /><path d="M10.500 7.500v3h2.500" stroke="#00a" /></I></div>
            </div>
            <div className="flex h-[656px] w-[191px] shrink-0 flex-col overflow-hidden border border-[#828790] bg-white">
              <div className="flex h-[638px] w-[188px] shrink-0 flex-col overflow-hidden pt-[1px]">
                <TreeRow label="LAB_Simulation_04_Delta" w={164} />
                <TreeRow child label="LAB_Simulation_04_Delta" w={164} />
                <TreeRow label="LAB_Simulation_04_Wye-Circuit" w={208} />
                <TreeRow child sel label="LAB_Simulation_04_Wye-Circuit" w={208} />
              </div>
              <div className="flex h-[16px] items-center bg-[#f0f0f0]"><div className="ml-[18px] h-[2px] w-[103px] rounded bg-[#868686]" /></div>
            </div>
          </div>
          <div className="ml-[1px] flex items-start">
            <Tab label="Hierarchy" w={59} lw={47} active /><Tab label="Visibility" w={48} lw={38} /><Tab label="Project View" w={80} lw={71} />
          </div>
        </div>
        <div className="flex w-[1685px] shrink-0 flex-col border-l border-[#6e6e6e]">
          <div className="h-[715px] shrink-0 border-r-2 border-b-2 border-[#6e6e6e] pt-[3px] pl-[4px]">
            <div className="flex h-[704px] w-[1676px] border-t border-l border-[#6e6e6e] bg-[#f0f0f0]">
              <Schematic />
              <div className="flex w-[18px] shrink-0 justify-center border-r border-l border-[#fff] pt-[36px]"><div className="h-[434px] w-[2px] rounded bg-[#868686]" /></div>
            </div>
          </div>
          <div className="flex h-[27px] items-start">
            <div className="flex h-[26px] w-[520px] items-center overflow-hidden border-b-2 border-black pl-[31px] text-[14.5px]">
              <T w={165} className="leading-[24px]">LAB_Simulation_04_Delta</T>
              <T w={215} className="ml-[75px] leading-[24px]">LAB_Simulation_04_Wye-Circuit</T>
            </div>
            <div className="mt-[6px] mr-[3px] ml-auto flex h-[15px] w-[15px] items-center justify-center border-r border-b border-[#555]"><I s={12}><path d="M1 2h8v6H1zM5 6h9v7H5zM8 9h7v6H8z" fill="#fff" stroke="#000090" strokeWidth="1.600" /><path d="M12 4l3-3" stroke="#000090" strokeWidth="1.500" /></I></div>
          </div>
        </div>
        <RightStrip />
      </div>
      {/* spreadsheet view */}
      <div className="flex h-[147px] shrink-0 border-t-2 border-b border-t-[#6e6e6e] border-b-[#999]">
        <div className="flex w-[31px] shrink-0 flex-col">
          <div className="ml-[7px] flex flex-col gap-[2px]"><MiniBtn><X size={9} strokeWidth={4} /></MiniBtn><MiniBtn dis><svg width="4" height="6"><path d="M0 0v6l4-3z" fill="#999" /></svg></MiniBtn></div>
          <div className="mt-[3px] ml-[2px] flex h-[107px] w-[25px] items-end overflow-hidden bg-gradient-to-t from-[#bccad8] to-[#d8e6f4]">
            <span className="mb-[4px] ml-[-3px] h-[105px] rotate-180 text-[15px] leading-[22px] whitespace-nowrap [writing-mode:vertical-rl]">Spreadsheet Vi</span>
          </div>
        </div>
        <div className="flex w-[1884px] flex-col pt-[4px]">
          <div className="h-[115px] shrink-0 border-t border-r-2 border-b-2 border-t-white border-r-[#777] border-b-[#777] pr-[3px] pb-[3px]">
            <div className="flex h-full flex-col border border-[#828790] bg-white pt-[2px] pl-[24px] text-[14.5px]">
              <div className="flex h-[24px]"><T w={106} className="leading-[24px]">{"Multisim  -  Wed"}</T><T w={37} className="ml-[161px] leading-[24px]">22:13</T></div>
              <div className="flex h-[24px]"><T w={110} className="leading-[24px]">Cannot move sel</T><T w={24} className="ml-[167px] leading-[24px]">l be</T></div>
            </div>
          </div>
          <div className="flex items-start pl-px">
            <Tab label="Results" w={47} lw={36} active /><Tab label="Nets" w={36} lw={22} /><div className="w-[5px]" /><Tab label="Components" w={71} lw={60} /><Tab label="Copper layers" w={79} lw={67} /><Tab label="Simulation" w={59} lw={48} />
          </div>
        </div>
      </div>
      {/* status bar */}
      <div className="flex h-[23px] shrink-0 items-center border-t border-white pl-[2px] text-[14px]">
        <T w={117} className="mt-[2px] leading-[20px]">For Help, press F1</T>
        <div className="mt-[2px] ml-[1223px] w-[148px] shrink-0 border-r border-[#d0d0d0] leading-[20px]">-</div>
        <div className="h-[20px] w-[183px] shrink-0 border-r border-[#d0d0d0]" />
        <div className="h-[20px] w-[183px] shrink-0 border-r border-[#d0d0d0] pt-px pl-[5px]"><T w={80} className="leading-[20px]">Tran: 0.262 s</T></div>
        <div className="ml-[4px] flex gap-[2px]">{[0, 1, 2, 3, 4, 5, 6].map((k) => <div key={k} className="h-[13px] w-[6px] border border-[#aaa] border-r-[#ddd] border-b-[#ddd]" />)}</div>
      </div>
      {/* soft shadow below the floating meters */}
      <div className="absolute top-[815px] left-0 h-[217px] w-[1920px] overflow-hidden">
        {[155, 349, 539, 731, 923, 1116].map((x) => (
          <div key={x} className="absolute top-[15px] h-[165px] w-[179px] rounded-lg shadow-[0_22px_40px_rgba(0,0,0,0.25)]" style={{ left: x }} />
        ))}
      </div>
      <Multimeter x={155} y={826} n={1} v="10 V" />
      <Multimeter x={349} y={829} n={2} v="5 V" />
      <Multimeter x={539} y={830} n={3} v="5 V" />
      <Multimeter x={731} y={829} n={4} v="5 V" />
      <Multimeter x={923} y={830} n={5} v="0 V" />
      <Multimeter x={1116} y={830} n={6} v="5 V" />
      <Taskbar />
    </div>
  );
}
